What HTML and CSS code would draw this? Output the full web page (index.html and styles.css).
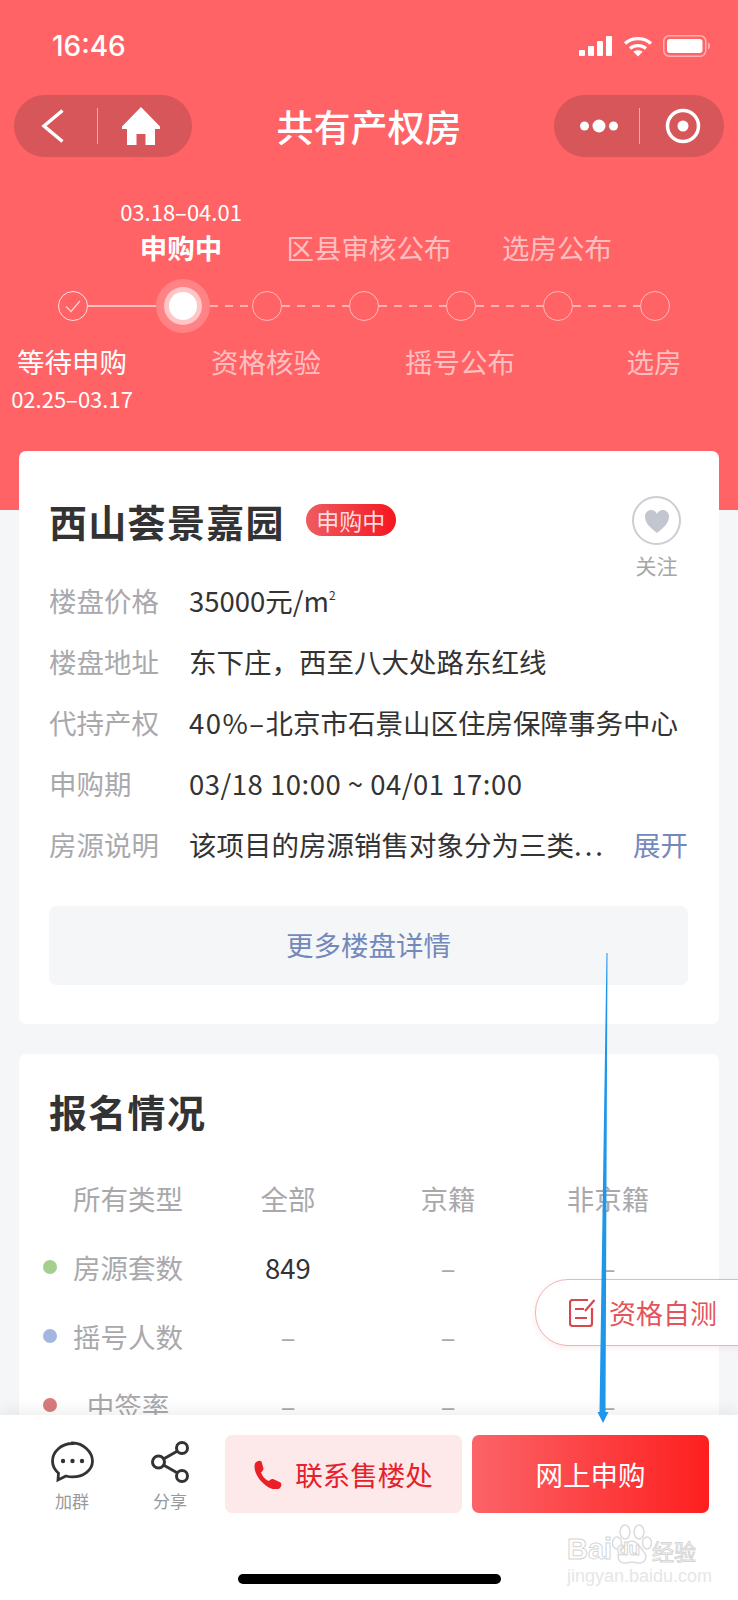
FILE: index.html
```html
<!DOCTYPE html>
<html lang="zh">
<head>
    <meta charset="utf-8">
    <title>共有产权房</title>
    <link rel="stylesheet" href="styles.css">
</head>
<body>
<div class="page">
    <div class="hero">
        <div class="status-bar">
            <span class="time">16:46</span>
            <div class="status-icons">
                <svg width="34" height="20" viewBox="0 0 34 20" fill="#fff"><rect x="0" y="14" width="6" height="6" rx="1"/><rect x="9" y="10" width="6" height="10" rx="1"/><rect x="18" y="5" width="6" height="15" rx="1"/><rect x="27" y="0" width="6" height="20" rx="1"/></svg>
                <svg width="30" height="21" viewBox="0 0 30 21" fill="none" stroke="#fff" stroke-width="3.4"><path d="M2 7.5C9.500 1 20.500 1 28 7.500"/><path d="M7 12.500c4.700-3.800 11.300-3.800 16 0"/><path d="M15 20.500l-4.600-4.700c2.700-2 6.500-2 9.200 0z" fill="#fff" stroke="none"/></svg>
                <svg width="47" height="22" viewBox="0 0 47 22"><rect x="0.750" y="0.750" width="42" height="20.500" rx="5.500" fill="none" stroke="#fff" stroke-opacity=".5" stroke-width="1.500"/><rect x="4" y="4" width="35.500" height="14" rx="3" fill="#fff"/><path d="M45 7.500c1.200.4 2 1.800 2 3.500s-.8 3.100-2 3.500z" fill="#fff" fill-opacity=".5"/></svg>
            </div>
        </div>

        <div class="nav-bar">
            <div class="capsule">
                <svg class="back-icon" width="24" height="34" viewBox="0 0 24 34" fill="none" stroke="#fff" stroke-width="3.500"><path d="M21.500 1.500L3 17l18.500 15.500"/></svg>
                <span class="capsule-line"></span>
                <svg class="home-icon" width="38" height="38" viewBox="0 0 38 38" fill="#fff"><path d="M19 0L38 19.500 38 22 33 22 33 38 23.500 38 23.500 27 14.500 27 14.500 38 5 38 5 22 0 22 0 19.500z"/></svg>
            </div>
            <div class="nav-title">共有产权房</div>
            <div class="capsule capsule-right">
                <svg width="38" height="16" viewBox="0 0 38 16" fill="#fff"><circle cx="4.500" cy="8" r="4.500"/><circle cx="19" cy="8" r="6.500"/><circle cx="33.500" cy="8" r="4.500"/></svg>
                <span class="capsule-line"></span>
                <svg width="36" height="36" viewBox="0 0 36 36"><circle cx="18" cy="18" r="15.500" fill="none" stroke="#fff" stroke-width="3.500"/><circle cx="18" cy="18" r="5.500" fill="#fff"/></svg>
            </div>
        </div>

        <div class="step-date step-date-top">03.18–04.01</div>
        <div class="steps-top">
            <div class="step-name current">申购中</div>
            <div class="step-name dim">区县审核公布</div>
            <div class="step-name dim">选房公布</div>
        </div>

        <div class="stepper">
            <span class="node done">
                <svg width="16" height="13" viewBox="0 0 16 13" fill="none" stroke="#ffd6d6" stroke-width="1.200"><path d="M1 6.500l5 5L15 1"/></svg>
            </span>
            <span class="link solid"></span>
            <span class="node-active"><span class="node-dot"></span></span>
            <span class="link dashed short"></span>
            <span class="node"></span>
            <span class="link dashed"></span>
            <span class="node"></span>
            <span class="link dashed"></span>
            <span class="node"></span>
            <span class="link dashed"></span>
            <span class="node"></span>
            <span class="link dashed"></span>
            <span class="node"></span>
        </div>

        <div class="steps-bottom">
            <div class="step-name first">等待申购</div>
            <div class="step-name dim">资格核验</div>
            <div class="step-name dim">摇号公布</div>
            <div class="step-name dim">选房</div>
        </div>
        <div class="step-date step-date-bottom">02.25–03.17</div>
    </div>

    <div class="card card-info">
        <div class="card-head">
            <h1>西山荟景嘉园</h1>
            <span class="badge">申购中</span>
            <div class="follow">
                <span class="follow-circle">
                    <svg width="26" height="24" viewBox="0 0 26 24" fill="#c4c6cf"><path d="M13 24C6 18.500 1 14 1 7.500 1 3.500 4 1 7.200 1 9.800 1 12 2.500 13 5c1-2.500 3.200-4 5.800-4C22 1 25 3.500 25 7.500 25 14 20 18.500 13 24z"/></svg>
                </span>
                <span class="follow-text">关注</span>
            </div>
        </div>
        <div class="info-row"><span class="info-label">楼盘价格</span><span class="info-value">35000元/m<sup class="sup">2</sup></span></div>
        <div class="info-row"><span class="info-label">楼盘地址</span><span class="info-value">东下庄，西至八大处路东红线</span></div>
        <div class="info-row"><span class="info-label">代持产权</span><span class="info-value"><span class="percent">40%–</span>北京市石景山区住房保障事务中心</span></div>
        <div class="info-row"><span class="info-label">申购期</span><span class="info-value period">03/18 10:00 ~ 04/01 17:00</span></div>
        <div class="info-row">
            <span class="info-label">房源说明</span>
            <span class="info-value">该项目的房源销售对象分为三类<span class="dots">...</span></span>
            <span class="expand">展开</span>
        </div>
        <div class="more-btn">更多楼盘详情</div>
    </div>

    <div class="card card-signup">
        <h2>报名情况</h2>
        <div class="stat-row head">
            <span>所有类型</span><span>全部</span><span>京籍</span><span>非京籍</span>
        </div>
        <div class="stat-row">
            <span class="stat-name"><i class="dot green"></i>房源套数</span><span class="num">849</span><span>–</span><span>–</span>
        </div>
        <div class="stat-row">
            <span class="stat-name"><i class="dot blue"></i>摇号人数</span><span>–</span><span>–</span><span></span>
        </div>
        <div class="stat-row">
            <span class="stat-name"><i class="dot red"></i>中签率</span><span>–</span><span>–</span><span>–</span>
        </div>
    </div>

    <div class="self-test">
        <svg width="27" height="28" viewBox="0 0 27 28" fill="none" stroke="#d8474d" stroke-width="2.200"><path d="M23 9v15.500a2.500 2.500 0 0 1-2.500 2.500h-17A2.500 2.500 0 0 1 1 24.500v-21A2.500 2.500 0 0 1 3.500 1H19"/><path d="M6 10h9M6 19h12"/><path d="M16 12L25.500 1"/></svg>
        <span>资格自测</span>
    </div>

    <div class="bottom-bar">
        <div class="bar-row">
            <div class="tool">
                <svg width="43" height="40" viewBox="0 0 43 40" fill="none" stroke="#333" stroke-width="2.800"><path d="M21.500 1.500C10.500 1.500 1.500 9.500 1.500 19c0 4.800 2.300 9 6 12.200L7 38l8-4c2 .6 4.200.9 6.500.9 11 0 20-7 20-15.900s-9-18-20-18z"/><circle cx="12" cy="19" r="2.200" fill="#333" stroke="none"/><circle cx="21.500" cy="19" r="2.200" fill="#333" stroke="none"/><circle cx="31" cy="19" r="2.200" fill="#333" stroke="none"/></svg>
                <span>加群</span>
            </div>
            <div class="tool">
                <svg width="38" height="42" viewBox="0 0 38 42" fill="none" stroke="#333" stroke-width="3"><circle cx="31" cy="7" r="5.500"/><circle cx="7.500" cy="21" r="6"/><circle cx="31" cy="35" r="5.500"/><path d="M26.500 10L12.500 18M12.500 24l14 8"/></svg>
                <span>分享</span>
            </div>
            <div class="btn btn-light">
                <svg width="28" height="29" viewBox="0 0 28 29" fill="#ea2026"><path d="M1 3.500C2.500 1 6 0 7.500 1.500l2 7c.3 1.500-1.500 3-2.500 4 1.500 4 4 7 7.500 8.500 1.500-1 3-2.500 4.500-2l7.500 3.500c1.500 1.500 1 5-2 6.500-3.500 1.500-9.500-.5-14.500-5C3.500 18.500-1 10 1 3.500z"/></svg>
                <span>联系售楼处</span>
            </div>
            <div class="btn btn-primary">网上申购</div>
        </div>
        <div class="home-bar"></div>
    </div>

    <div class="watermark">
        <div class="wm-line">
            <span class="wm-bai">Bai</span>
            <svg class="wm-paw" width="40" height="42" viewBox="0 0 40 42" fill="#fff" stroke="#dcdcdc" stroke-width="1.500"><ellipse cx="13" cy="8" rx="5" ry="7"/><ellipse cx="27" cy="8" rx="5" ry="7"/><ellipse cx="5" cy="19" rx="4.500" ry="6"/><ellipse cx="35" cy="19" rx="4.500" ry="6"/><path d="M20 17c6 0 8 7 12 11 4 5 1 12-6 11-3-.4-4-1-6-1s-3 .6-6 1c-7 1-10-6-6-11 4-4 6-11 12-11z"/></svg>
            <span class="wm-du">du</span>
            <span class="wm-cn">经验</span>
        </div>
        <div class="wm-url">jingyan.baidu.com</div>
    </div>

    <svg class="arrow" width="30" height="480" viewBox="590 950 30 480"><path d="M606.500 953L607.500 953 605.500 1412 608.500 1412 603 1423 597.500 1412 599.500 1412z" fill="#1e96ea"/></svg>
</div>
</body>
</html>
```

FILE: styles.css
```css
* {
    box-sizing: border-box;
}
html, body {
    margin: 0;
    padding: 0;
}
body {
    font-family: "Noto Sans CJK SC", "Noto Sans", sans-serif;
    background-color: #f5f6f8;
    color: #333;
}
.page {
    position: relative;
    width: 738px;
    height: 1600px;
    overflow: hidden;
    background-color: #f5f6f8;
}
.hero {
    height: 510px;
    background-color: #ff6366;
    color: #fff;
    overflow: hidden;
}
.status-bar {
    height: 92px;
    padding: 0 28px 0 52px;
    display: flex;
    justify-content: space-between;
    align-items: center;
}
.time {
    font-family: "Inter", sans-serif;
    font-size: 28px;
    font-weight: 500;
}
.status-icons {
    display: flex;
    align-items: center;
    gap: 10px;
}
.nav-bar {
    margin-top: 3px;
    padding: 0 14px;
    display: grid;
    grid-template-columns: 178px 1fr 170px;
    align-items: center;
}
.capsule {
    height: 62px;
    border-radius: 31px;
    background-color: #d65659;
    display: flex;
    align-items: center;
    padding-left: 27px;
}
.capsule-line {
    width: 1px;
    height: 36px;
    background-color: rgba(255, 255, 255, 0.5);
    margin-left: 32px;
}
.home-icon {
    margin-left: 24px;
}
.capsule-right {
    padding-left: 26px;
}
.capsule-right .capsule-line {
    margin-left: 21px;
    margin-right: 25px;
}
.nav-title {
    padding-right: 8px;
    font-size: 37px;
    font-weight: 500;
    line-height: 50px;
    text-align: center;
}
.step-date {
    font-size: 22px;
    line-height: 30px;
    width: 160px;
    text-align: center;
}
.step-date-top {
    margin: 39px 0 0 101px;
}
.steps-top {
    display: flex;
    margin: 5px 0 0 87px;
}
.steps-top .step-name {
    width: 188px;
}
.step-name {
    font-size: 27.500px;
    line-height: 32px;
    text-align: center;
    white-space: nowrap;
}
.step-name.current {
    font-weight: 700;
}
.step-name.dim {
    color: rgba(255, 255, 255, 0.6);
}
.stepper {
    display: flex;
    align-items: center;
    height: 54px;
    margin-top: 16px;
    padding-left: 58px;
}
.node {
    width: 30px;
    height: 30px;
    flex: none;
    border: 1px solid rgba(255, 255, 255, 0.55);
    border-radius: 50%;
    display: flex;
    align-items: center;
    justify-content: center;
}
.node.done {
    border-color: rgba(255, 255, 255, 0.8);
}
.node-active {
    width: 54px;
    height: 54px;
    flex: none;
    border-radius: 50%;
    background-color: rgba(255, 255, 255, 0.2);
    display: flex;
    align-items: center;
    justify-content: center;
}
.node-dot {
    width: 28px;
    height: 28px;
    border-radius: 50%;
    background-color: #fff;
    box-shadow: 0 0 0 5px rgba(255, 255, 255, 0.55);
}
.link {
    width: 67px;
    height: 2px;
    flex: none;
}
.link.solid {
    width: 68px;
    background-color: rgba(255, 255, 255, 0.6);
}
.link.dashed {
    background-image: repeating-linear-gradient(90deg, rgba(255, 255, 255, 0.5) 0 8px, transparent 8px 15px);
}
.link.short {
    width: 42px;
}
.steps-bottom {
    display: flex;
    margin: 12px 0 0 -25px;
}
.steps-bottom .step-name {
    width: 194px;
    flex: none;
}
.step-date-bottom {
    width: 144px;
    margin-top: 6px;
}
.card {
    width: 700px;
    margin-left: 19px;
    background-color: #fff;
    border-radius: 7px;
    padding: 0 31px 0 30px;
}
.card-info {
    margin-top: -59px;
    position: relative;
    padding-top: 44px;
    padding-bottom: 39px;
}
.card-head {
    height: 50px;
    display: flex;
    align-items: center;
}
h1, h2 {
    margin: 0;
    font-size: 38px;
    font-weight: 700;
    letter-spacing: 1.300px;
    color: #333;
    white-space: nowrap;
}
.badge {
    margin-left: 21px;
    width: 90px;
    height: 32px;
    border-radius: 16px;
    background: linear-gradient(90deg, #ee5c60, #f5161f);
    color: #ffdcdd;
    font-size: 23px;
    line-height: 32px;
    text-align: center;
}
.follow {
    margin-left: auto;
    margin-right: 7px;
    width: 49px;
    height: 50px;
    padding-top: 1px;
    display: flex;
    flex-direction: column;
    align-items: center;
}
.follow-circle {
    width: 49px;
    height: 49px;
    flex: none;
    border: 2px solid #ccced2;
    border-radius: 50%;
    display: flex;
    align-items: center;
    justify-content: center;
}
.follow-text {
    margin-top: 5px;
    font-size: 21px;
    line-height: 30px;
    color: #a6a6a8;
    white-space: nowrap;
}
.info-row {
    height: 61px;
    display: flex;
    align-items: center;
    font-size: 27.500px;
    white-space: nowrap;
}
.card-head + .info-row {
    margin-top: 24px;
}
.info-label {
    width: 140px;
    flex: none;
    color: #a9a9ad;
}
.info-value {
    color: #333;
}
.percent {
    letter-spacing: 1.500px;
}
.period {
    letter-spacing: 0.500px;
}
.sup {
    font-size: 12px;
    line-height: 0;
    vertical-align: 12px;
}
.dots {
    letter-spacing: 3px;
}
.expand {
    margin-left: auto;
    color: #7389bb;
}
.more-btn {
    margin-top: 32px;
    height: 79px;
    border-radius: 7px;
    background-color: #f5f6f8;
    color: #7389bb;
    font-size: 27.500px;
    line-height: 76px;
    text-align: center;
}
.card-signup {
    margin-top: 30px;
    height: 400px;
    padding-top: 30px;
}
h2 {
    line-height: 54px;
}
.stat-row {
    height: 69px;
    margin-left: -1px;
    display: grid;
    grid-template-columns: repeat(4, 160px);
    align-items: center;
    text-align: center;
    font-size: 27.500px;
    color: #a9a9ad;
}
.stat-row.head {
    margin-top: 25px;
}
.stat-name {
    position: relative;
}
.dot {
    position: absolute;
    left: -5px;
    top: 13px;
    width: 14px;
    height: 14px;
    border-radius: 50%;
}
.dot.green {
    background-color: #a5cf8e;
}
.dot.blue {
    background-color: #a3b6e0;
}
.dot.red {
    background-color: #d97b7d;
}
.num {
    color: #333;
}
.self-test {
    position: absolute;
    left: 535px;
    top: 1279px;
    width: 215px;
    height: 67px;
    padding-left: 33px;
    border: 1px solid #f2b3b6;
    border-radius: 33px 0 0 33px;
    background-color: #fff;
    box-shadow: 0 2px 6px rgba(230, 90, 95, 0.12);
    display: flex;
    align-items: center;
    gap: 13px;
    color: #e4555b;
    font-size: 27px;
    white-space: nowrap;
}
.bottom-bar {
    position: absolute;
    left: 0;
    right: 0;
    top: 1415px;
    height: 185px;
    background-color: #fff;
    box-shadow: 0 -6px 14px rgba(0, 0, 0, 0.06);
    padding-top: 20px;
}
.bar-row {
    display: flex;
    padding-left: 23px;
}
.tool {
    width: 98px;
    height: 78px;
    padding-top: 6px;
    display: flex;
    flex-direction: column;
    align-items: center;
}
.tool svg {
    height: 42px;
    flex: none;
}
.tool span {
    margin-top: 6px;
    font-size: 17px;
    line-height: 24px;
    color: #999;
}
.btn {
    height: 78px;
    border-radius: 7px;
    font-size: 27.500px;
    display: flex;
    align-items: center;
    justify-content: center;
}
.btn-light {
    width: 237px;
    margin-left: 6px;
    background-color: #fde8ea;
    color: #e5222b;
    gap: 13px;
}
.btn-primary {
    width: 237px;
    margin-left: 10px;
    background: linear-gradient(90deg, #fb6468, #fe1f1f);
    color: #fff;
}
.home-bar {
    width: 263px;
    height: 10px;
    margin: 61px auto 0;
    border-radius: 5px;
    background-color: #000;
}
.watermark {
    position: absolute;
    left: 567px;
    top: 1520px;
    width: 135px;
}
.wm-line {
    position: relative;
    height: 46px;
    display: flex;
    align-items: flex-end;
    color: #fff;
    -webkit-text-stroke: 1px #d6d6d6;
    white-space: nowrap;
}
.wm-bai {
    width: 45px;
    font-family: "Liberation Sans", sans-serif;
    font-weight: 700;
    font-size: 29px;
    line-height: 34px;
}
.wm-paw {
    flex: none;
}
.wm-du {
    position: absolute;
    left: 50px;
    bottom: 6px;
    font-family: "Liberation Sans", sans-serif;
    font-weight: 700;
    font-size: 19px;
    line-height: 22px;
}
.wm-cn {
    font-size: 22px;
    line-height: 32px;
}
.wm-url {
    margin-top: 1px;
    font-family: "Liberation Sans", sans-serif;
    font-size: 18px;
    line-height: 18px;
    color: #e6e6e6;
    white-space: nowrap;
}
.arrow {
    position: absolute;
    left: 590px;
    top: 950px;
}
```
